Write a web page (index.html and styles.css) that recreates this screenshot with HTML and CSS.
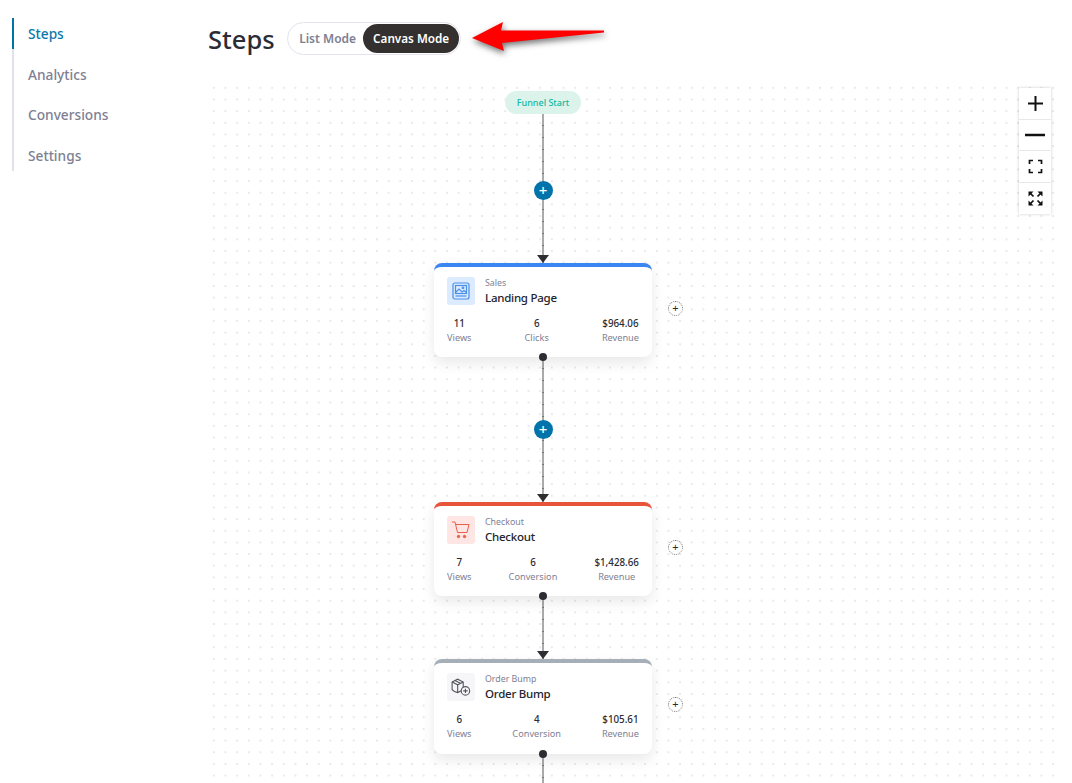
FILE: index.html
```html
<!DOCTYPE html>
<html lang="en">
<head>
    <meta charset="UTF-8">
    <title>Steps</title>
    <link rel="stylesheet" href="styles.css">
</head>
<body>
    <div class="page">
        <!-- Side menu -->
        <nav class="side-menu">
            <a class="menu-item active">Steps</a>
            <a class="menu-item">Analytics</a>
            <a class="menu-item">Conversions</a>
            <a class="menu-item">Settings</a>
        </nav>

        <main class="content">
            <div class="top-bar">
                <h1>Steps</h1>
                <div class="mode-toggle">
                    <span class="mode-btn">List Mode</span>
                    <span class="mode-btn current">Canvas Mode</span>
                </div>
                <svg class="red-arrow" width="140" height="40" viewBox="0 0 140 40">
                    <polygon points="2,20 33,4 31,12.5 134,12.5 134,14.5 32,25 34,33" fill="#ff0000"/>
                </svg>
            </div>

            <!-- Canvas -->
            <div class="canvas">
                <div class="flow">
                    <div class="start-pill">Funnel Start</div>

                    <div class="edge edge-long">
                        <span class="add-step">+</span>
                    </div>

                    <div class="step-card blue">
                        <div class="card-head">
                            <div class="card-icon">
                                <svg width="18" height="18" viewBox="0 0 18 18" fill="none" stroke="#4a90e8" stroke-width="1.2">
                                    <rect x="1" y="1" width="16" height="16" rx="2"/>
                                    <rect x="3.5" y="3.5" width="11" height="8"/>
                                    <path d="M3.5 10.5l3.5-3.5 3 3 2-1.5 2.5 2"/>
                                    <circle cx="11" cy="5.8" r="0.8"/>
                                    <path d="M3.5 14h11"/>
                                </svg>
                            </div>
                            <div>
                                <div class="card-type">Sales</div>
                                <div class="card-title">Landing Page</div>
                            </div>
                        </div>
                        <div class="card-stats">
                            <div class="stat"><b>11</b><span>Views</span></div>
                            <div class="stat"><b>6</b><span>Clicks</span></div>
                            <div class="stat"><b>$964.06</b><span>Revenue</span></div>
                        </div>
                        <span class="side-add">+</span>
                    </div>

                    <div class="edge edge-mid">
                        <span class="add-step">+</span>
                    </div>

                    <div class="step-card red">
                        <div class="card-head">
                            <div class="card-icon">
                                <svg width="20" height="20" viewBox="0 0 20 20" fill="none" stroke="#e8604a" stroke-width="1">
                                    <path d="M1 2h3l2.5 10.5h9.5l2-8h-13"/>
                                    <circle cx="7.5" cy="16.5" r="1.2" fill="#e8604a"/>
                                    <circle cx="13.5" cy="16.5" r="1.2" fill="#e8604a"/>
                                </svg>
                            </div>
                            <div>
                                <div class="card-type">Checkout</div>
                                <div class="card-title">Checkout</div>
                            </div>
                        </div>
                        <div class="card-stats">
                            <div class="stat"><b>7</b><span>Views</span></div>
                            <div class="stat"><b>6</b><span>Conversion</span></div>
                            <div class="stat"><b>$1,428.66</b><span>Revenue</span></div>
                        </div>
                        <span class="side-add">+</span>
                    </div>

                    <div class="edge edge-short"></div>

                    <div class="step-card gray">
                        <div class="card-head">
                            <div class="card-icon">
                                <svg width="20" height="20" viewBox="0 0 18 18" fill="none" stroke="#55565f" stroke-width="1">
                                    <path d="M1 4.5l5-2.5 5 2.5v7l-5 2.5-3-1-2-1.5z"/>
                                    <path d="M1 4.5l5 2.5 5-2.5M6 7v7M3.5 3.2l5 2.5"/>
                                    <circle cx="13" cy="12.5" r="3.8" fill="#f6f6f8"/>
                                    <path d="M13 10.5v4M11 12.5h4"/>
                                </svg>
                            </div>
                            <div>
                                <div class="card-type">Order Bump</div>
                                <div class="card-title">Order Bump</div>
                            </div>
                        </div>
                        <div class="card-stats">
                            <div class="stat"><b>6</b><span>Views</span></div>
                            <div class="stat"><b>4</b><span>Conversion</span></div>
                            <div class="stat"><b>$105.61</b><span>Revenue</span></div>
                        </div>
                        <span class="side-add">+</span>
                    </div>

                    <div class="edge edge-tail"></div>
                </div>

                <!-- Zoom controls -->
                <div class="zoom-controls">
                    <button class="zoom-btn">
                        <svg width="15" height="15" viewBox="0 0 15 15" stroke="#111" stroke-width="2"><path d="M0 7.5h15M7.5 0v15"/></svg>
                    </button>
                    <button class="zoom-btn">
                        <svg width="20" height="4" viewBox="0 0 20 4" stroke="#111" stroke-width="2.5"><path d="M0 2h20"/></svg>
                    </button>
                    <button class="zoom-btn">
                        <svg width="15" height="15" viewBox="0 0 15 15" fill="none" stroke="#111" stroke-width="1.7"><path d="M1.5 5V1.5H5M10 1.5h3.5V5M13.500 10v3.500H10M5 13.500H1.500V10"/></svg>
                    </button>
                    <button class="zoom-btn">
                        <svg width="15" height="15" viewBox="0 0 15 15" fill="#111" stroke="#111" stroke-width="1.7"><path d="M0.5 0.5h5l-5 5zM14.5 0.5h-5l5 5zM0.5 14.5h5l-5-5zM14.5 14.5h-5l5-5z" stroke="none"/><path d="M2 2l3.500 3.500M13 2l-3.500 3.500M2 13l3.500-3.500M13 13l-3.500-3.500"/></svg>
                    </button>
                </div>
            </div>
        </main>
    </div>
</body>
</html>
```

FILE: styles.css
```css
* {
    box-sizing: border-box;
    font-family: 'Noto Sans', sans-serif;
}

html, body {
    height: 783px;
    overflow: hidden;
}

body {
    margin: 0;
    background: #fff;
    color: #2b2b33;
}

.page {
    display: flex;
    align-items: flex-start;
    padding-left: 12px;
}

/* Side menu */
.side-menu {
    width: 196px;
    flex-shrink: 0;
    margin-top: 18px;
    display: flex;
    flex-direction: column;
    background: linear-gradient(#e1e1ee, #e1e1ee) left top / 2px 100% no-repeat;
}

.menu-item {
    height: 40.5px;
    padding: 6px 0 0 14px;
    font-size: 13.7px;
    font-weight: 500;
    line-height: 20px;
    color: #7e8093;
    border-left: 2px solid transparent;
}

.menu-item:last-child {
    height: 31px;
}

.menu-item.active {
    height: 31px;
    margin-bottom: 9.5px;
    color: #0a78ab;
    border-left-color: #0073aa;
}

.content {
    flex: 1;
    min-width: 0;
}

.top-bar {
    display: flex;
    align-items: center;
    height: 82px;
    padding-bottom: 6px;
    position: relative;
}

h1 {
    margin: 2px 12.5px 0 0;
    font-size: 25.5px;
    font-weight: 500;
    line-height: 34px;
    color: #2c2c35;
}

.mode-toggle {
    display: flex;
    align-items: center;
    gap: 7px;
    height: 33px;
    padding: 0 1px 0 11px;
    border: 1px solid #e3e3ef;
    border-radius: 17px;
    background: #fff;
}

.mode-btn {
    font-size: 12px;
    font-weight: 600;
    color: #7e8093;
    white-space: nowrap;
}

.mode-btn.current {
    display: block;
    padding: 0 10px;
    height: 29px;
    font-size: 11.7px;
    line-height: 29px;
    border-radius: 15px;
    background: #353030;
    color: #fff;
}

.red-arrow {
    position: absolute;
    left: 262px;
    top: 18px;
    filter: drop-shadow(1px 3px 3px rgba(0, 0, 0, 0.55));
}

/* Canvas */
.canvas {
    position: relative;
    height: 701px;
    width: 852px;
    padding-top: 9px;
    background-image: radial-gradient(circle, #c4c4c4 0.5px, transparent 0.8px);
    background-size: 11.67px 11.67px;
}

.flow {
    width: 218px;
    margin-left: 226px;
    display: flex;
    flex-direction: column;
    align-items: center;
}

.start-pill {
    width: 76px;
    height: 23px;
    line-height: 24px;
    text-align: center;
    font-size: 9px;
    font-weight: 500;
    color: #10b8a0;
    background: #dcf3ec;
    border-radius: 12px;
}

.edge {
    position: relative;
    width: 20px;
    display: flex;
    align-items: center;
    justify-content: center;
    background: repeating-linear-gradient(#aaa 0 11px, #777 11px 12px) center / 2px 100% no-repeat;
}

.edge::after {
    content: "";
    position: absolute;
    left: 3.5px;
    bottom: 0;
    border-top: 8px solid #2f2f33;
    border-left: 6.5px solid transparent;
    border-right: 6.5px solid transparent;
}

.edge-long {
    height: 149px;
    padding-top: 4px;
}

.edge-mid {
    height: 145px;
}

.edge-short {
    height: 63px;
}

.edge-tail {
    height: 40px;
}

.edge-tail::after {
    display: none;
}

.add-step {
    width: 19px;
    height: 19px;
    border-radius: 50%;
    background: #0073aa;
    color: #fff;
    font-size: 15px;
    font-weight: 500;
    line-height: 18px;
    text-align: center;
}

/* Step cards */
.step-card {
    position: relative;
    z-index: 1;
    width: 218px;
    height: 94px;
    padding: 10px 13px 0;
    background: #fff;
    border-top: 4px solid #3b86f0;
    border-radius: 8px;
    box-shadow: 0 6px 14px rgba(0, 0, 0, 0.09);
}

.step-card.red {
    border-top-color: #e8543a;
}

.step-card.gray {
    border-top-color: #a6afb8;
    height: 95px;
}

.step-card::after {
    content: "";
    position: absolute;
    left: 105px;
    bottom: -4px;
    width: 8px;
    height: 8px;
    border-radius: 50%;
    background: #2c2c33;
}

.card-head {
    display: flex;
    gap: 10px;
    height: 32px;
}

.card-icon {
    width: 28px;
    height: 28px;
    display: flex;
    align-items: center;
    justify-content: center;
    border-radius: 3px;
    background: #dcebff;
}

.red .card-icon {
    background: #ffe5e3;
}

.gray .card-icon {
    background: #f6f6f8;
}

.card-type {
    font-size: 8.8px;
    line-height: 12px;
    color: #7e8093;
}

.card-title {
    margin-top: 1px;
    font-size: 11.5px;
    font-weight: 500;
    line-height: 16px;
    letter-spacing: -0.25px;
    color: #24242c;
}

.card-stats {
    display: flex;
    justify-content: space-between;
    margin-top: 8px;
}

.stat {
    text-align: center;
}

.stat b {
    display: block;
    font-size: 9.8px;
    font-weight: 500;
    line-height: 14px;
    color: #2b2b33;
}

.stat span {
    display: block;
    font-size: 9.2px;
    line-height: 14px;
    color: #7e8093;
}

.side-add {
    position: absolute;
    right: -31px;
    top: 34px;
    width: 15px;
    height: 15px;
    border: 1px dotted #777;
    border-radius: 50%;
    background: #fff;
    font-size: 11px;
    line-height: 12px;
    text-align: center;
    color: #2b2b33;
}

/* Zoom controls */
.zoom-controls {
    position: absolute;
    top: 6px;
    left: 811px;
    width: 32px;
    background: #fff;
    box-shadow: 0 0 3px rgba(0, 0, 0, 0.2);
}

.zoom-btn {
    display: flex;
    align-items: center;
    justify-content: center;
    width: 32px;
    height: 31.5px;
    padding: 0;
    border: none;
    border-bottom: 1px solid #e8e8e8;
    background: #fff;
}

.zoom-btn:last-child {
    border-bottom: none;
}
```
